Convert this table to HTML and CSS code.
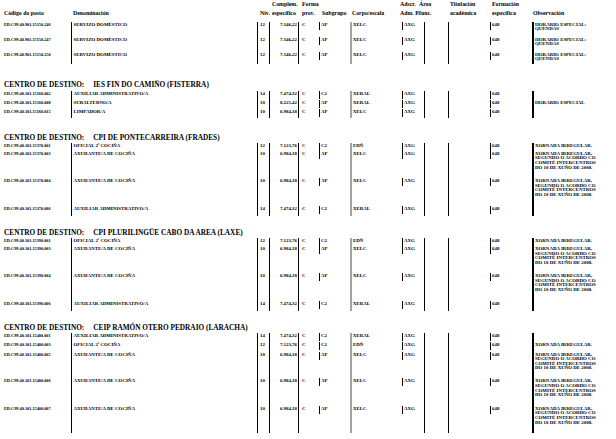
FILE: index.html
```html
<!DOCTYPE html>
<html lang="gl">
<head>
<meta charset="utf-8">
<title>Relación de postos</title>
<link rel="stylesheet" href="styles.css">
</head>
<body>
<div class="page">
  <div class="thead">
    <div class="code">Código do posto</div>
    <div>Denominación</div>
    <div>Niv.</div>
    <div>Complem.<br>específico</div>
    <div>Forma<br>prov.</div>
    <div>Subgrupo</div>
    <div>Corpo/escala</div>
    <div>Adscr.<br>Adm. P.</div>
    <div class="area-h">Área<br>func.</div>
    <div>Titulación<br>académica</div>
    <div>Formación<br>específica</div>
    <div>Observación</div>
  </div>

  <div class="block top">
    <div class="row h-15">
      <div class="code">ED.C99.40.901.15150.246</div><div class="den">SERVIZO DOMÉSTICO</div><div class="niv">12</div><div class="comp">7.346,22</div><div class="forma">C</div><div class="seg"><span>AP</span></div><div class="corpo">XELC</div><div class="seg"><span>AXG</span></div><div class="line"></div><div class="line"></div><div class="seg"><span>648</span></div><div class="obs">HORARIO ESPECIAL:<br>QUENDAS</div>
    </div>
    <div class="row h-15">
      <div class="code">ED.C99.40.901.15150.247</div><div class="den">SERVIZO DOMÉSTICO</div><div class="niv">12</div><div class="comp">7.346,22</div><div class="forma">C</div><div class="seg"><span>AP</span></div><div class="corpo">XELC</div><div class="seg"><span>AXG</span></div><div class="line"></div><div class="line"></div><div class="seg"><span>648</span></div><div class="obs">HORARIO ESPECIAL:<br>QUENDAS</div>
    </div>
    <div class="row h-12">
      <div class="code">ED.C99.40.901.15150.250</div><div class="den">SERVIZO DOMÉSTICO</div><div class="niv">12</div><div class="comp">7.346,22</div><div class="forma">C</div><div class="seg"><span>AP</span></div><div class="corpo">XELC</div><div class="seg"><span>AXG</span></div><div class="line"></div><div class="line"></div><div class="seg"><span>648</span></div><div class="obs">HORARIO ESPECIAL:<br>QUENDAS</div>
    </div>
  </div>

  <h2 class="centro first"><span>CENTRO DE DESTINO:</span><span>IES FIN DO CAMIÑO (FISTERRA)</span></h2>
  <div class="block">
    <div class="row h-9">
      <div class="code">ED.C99.40.101.15160.002</div><div class="den">AUXILIAR ADMINISTRATIVO/A</div><div class="niv">14</div><div class="comp">7.474,32</div><div class="forma">C</div><div class="seg"><span>C2</span></div><div class="corpo">XERAL</div><div class="seg"><span>AXG</span></div><div class="line"></div><div class="line"></div><div class="seg"><span>648</span></div><div class="obs"></div>
    </div>
    <div class="row h-9b">
      <div class="code">ED.C99.40.101.15160.008</div><div class="den">SUBALTERNO/A</div><div class="niv">10</div><div class="comp">8.225,42</div><div class="forma">C</div><div class="seg"><span>AP</span></div><div class="corpo">XERAL</div><div class="seg"><span>AXG</span></div><div class="line"></div><div class="line"></div><div class="seg"><span>648</span></div><div class="obs">HORARIO ESPECIAL</div>
    </div>
    <div class="row h-9">
      <div class="code">ED.C99.40.101.15160.015</div><div class="den">LIMPADOR/A</div><div class="niv">10</div><div class="comp">6.984,18</div><div class="forma">C</div><div class="seg"><span>AP</span></div><div class="corpo">XELC</div><div class="seg"><span>AXG</span></div><div class="line"></div><div class="line"></div><div class="seg"><span>648</span></div><div class="obs"></div>
    </div>
  </div>

  <h2 class="centro second"><span>CENTRO DE DESTINO:</span><span>CPI DE PONTECARREIRA (FRADES)</span></h2>
  <div class="block">
    <div class="row h-7">
      <div class="code">ED.C99.40.101.15370.001</div><div class="den">OFICIAL 2ª COCIÑA</div><div class="niv">12</div><div class="comp">7.123,76</div><div class="forma">C</div><div class="seg"><span>C2</span></div><div class="corpo">EDÑ</div><div class="seg"><span>AXG</span></div><div class="line"></div><div class="line"></div><div class="seg"><span>648</span></div><div class="obs">XORNADA IRREGULAR.</div>
    </div>
    <div class="row h-27">
      <div class="code">ED.C99.40.101.15370.003</div><div class="den">AXUDANTE/A DE COCIÑA</div><div class="niv">10</div><div class="comp">6.984,18</div><div class="forma">C</div><div class="seg"><span>AP</span></div><div class="corpo">XELC</div><div class="seg"><span>AXG</span></div><div class="line"></div><div class="line"></div><div class="seg"><span>648</span></div><div class="obs">XORNADA IRREGULAR,<br>SEGUNDO O ACORDO CO<br>COMITÉ INTERCENTROS<br>DO 10 DE XUÑO DE 2008.</div>
    </div>
    <div class="row h-27">
      <div class="code">ED.C99.40.101.15370.004</div><div class="den">AXUDANTE/A DE COCIÑA</div><div class="niv">10</div><div class="comp">6.984,18</div><div class="forma">C</div><div class="seg"><span>AP</span></div><div class="corpo">XELC</div><div class="seg"><span>AXG</span></div><div class="line"></div><div class="line"></div><div class="seg"><span>648</span></div><div class="obs">XORNADA IRREGULAR,<br>SEGUNDO O ACORDO CO<br>COMITÉ INTERCENTROS<br>DO 10 DE XUÑO DE 2008.</div>
    </div>
    <div class="row h-10">
      <div class="code">ED.C99.40.101.15370.006</div><div class="den">AUXILIAR ADMINISTRATIVO/A</div><div class="niv">14</div><div class="comp">7.474,32</div><div class="forma">C</div><div class="seg"><span>C2</span></div><div class="corpo">XERAL</div><div class="seg"><span>AXG</span></div><div class="line"></div><div class="line"></div><div class="seg"><span>648</span></div><div class="obs"></div>
    </div>
  </div>

  <h2 class="centro"><span>CENTRO DE DESTINO:</span><span>CPI PLURILINGÜE CABO DA AREA (LAXE)</span></h2>
  <div class="block">
    <div class="row h-7">
      <div class="code">ED.C99.40.101.15390.001</div><div class="den">OFICIAL 2ª COCIÑA</div><div class="niv">12</div><div class="comp">7.123,76</div><div class="forma">C</div><div class="seg"><span>C2</span></div><div class="corpo">EDÑ</div><div class="seg"><span>AXG</span></div><div class="line"></div><div class="line"></div><div class="seg"><span>648</span></div><div class="obs">XORNADA IRREGULAR.</div>
    </div>
    <div class="row h-27">
      <div class="code">ED.C99.40.101.15390.003</div><div class="den">AXUDANTE/A DE COCIÑA</div><div class="niv">10</div><div class="comp">6.984,18</div><div class="forma">C</div><div class="seg"><span>AP</span></div><div class="corpo">XELC</div><div class="seg"><span>AXG</span></div><div class="line"></div><div class="line"></div><div class="seg"><span>648</span></div><div class="obs">XORNADA IRREGULAR,<br>SEGUNDO O ACORDO CO<br>COMITÉ INTERCENTROS<br>DO 10 DE XUÑO DE 2008.</div>
    </div>
    <div class="row h-27">
      <div class="code">ED.C99.40.101.15390.004</div><div class="den">AXUDANTE/A DE COCIÑA</div><div class="niv">10</div><div class="comp">6.984,18</div><div class="forma">C</div><div class="seg"><span>AP</span></div><div class="corpo">XELC</div><div class="seg"><span>AXG</span></div><div class="line"></div><div class="line"></div><div class="seg"><span>648</span></div><div class="obs">XORNADA IRREGULAR,<br>SEGUNDO O ACORDO CO<br>COMITÉ INTERCENTROS<br>DO 10 DE XUÑO DE 2008.</div>
    </div>
    <div class="row h-10">
      <div class="code">ED.C99.40.101.15390.006</div><div class="den">AUXILIAR ADMINISTRATIVO/A</div><div class="niv">14</div><div class="comp">7.474,32</div><div class="forma">C</div><div class="seg"><span>C2</span></div><div class="corpo">XERAL</div><div class="seg"><span>AXG</span></div><div class="line"></div><div class="line"></div><div class="seg"><span>648</span></div><div class="obs"></div>
    </div>
  </div>

  <h2 class="centro"><span>CENTRO DE DESTINO:</span><span>CEIP RAMÓN OTERO PEDRAIO (LARACHA)</span></h2>
  <div class="block">
    <div class="row h-9">
      <div class="code">ED.C99.40.101.15400.001</div><div class="den">AUXILIAR ADMINISTRATIVO/A</div><div class="niv">14</div><div class="comp">7.474,32</div><div class="forma">C</div><div class="seg"><span>C2</span></div><div class="corpo">XERAL</div><div class="seg"><span>AXG</span></div><div class="line"></div><div class="line"></div><div class="seg"><span>648</span></div><div class="obs"></div>
    </div>
    <div class="row h-9b">
      <div class="code">ED.C99.40.101.15400.003</div><div class="den">OFICIAL 2ª COCIÑA</div><div class="niv">12</div><div class="comp">7.123,76</div><div class="forma">C</div><div class="seg"><span>C2</span></div><div class="corpo">EDÑ</div><div class="seg"><span>AXG</span></div><div class="line"></div><div class="line"></div><div class="seg"><span>648</span></div><div class="obs">XORNADA IRREGULAR.</div>
    </div>
    <div class="row h-26">
      <div class="code">ED.C99.40.101.15400.005</div><div class="den">AXUDANTE/A DE COCIÑA</div><div class="niv">10</div><div class="comp">6.984,18</div><div class="forma">C</div><div class="seg"><span>AP</span></div><div class="corpo">XELC</div><div class="seg"><span>AXG</span></div><div class="line"></div><div class="line"></div><div class="seg"><span>648</span></div><div class="obs">XORNADA IRREGULAR,<br>SEGUNDO O ACORDO CO<br>COMITÉ INTERCENTROS<br>DO 10 DE XUÑO DE 2008.</div>
    </div>
    <div class="row h-27">
      <div class="code">ED.C99.40.101.15400.006</div><div class="den">AXUDANTE/A DE COCIÑA</div><div class="niv">10</div><div class="comp">6.984,18</div><div class="forma">C</div><div class="seg"><span>AP</span></div><div class="corpo">XELC</div><div class="seg"><span>AXG</span></div><div class="line"></div><div class="line"></div><div class="seg"><span>648</span></div><div class="obs">XORNADA IRREGULAR,<br>SEGUNDO O ACORDO CO<br>COMITÉ INTERCENTROS<br>DO 10 DE XUÑO DE 2008.</div>
    </div>
    <div class="row h-28">
      <div class="code">ED.C99.40.101.15400.007</div><div class="den">AXUDANTE/A DE COCIÑA</div><div class="niv">10</div><div class="comp">6.984,18</div><div class="forma">C</div><div class="seg"><span>AP</span></div><div class="corpo">XELC</div><div class="seg"><span>AXG</span></div><div class="line"></div><div class="line"></div><div class="seg"><span>648</span></div><div class="obs">XORNADA IRREGULAR,<br>SEGUNDO O ACORDO CO<br>COMITÉ INTERCENTROS<br>DO 10 DE XUÑO DE 2008.</div>
    </div>
  </div>
</div>
</body>
</html>
```

FILE: styles.css
```css
html, body {
  margin: 0;
  padding: 0;
  background: #ffffff;
}

body {
  font-family: "Liberation Serif", "Times New Roman", serif;
  font-weight: bold;
  color: #000000;
}

.page {
  width: 616px;
  overflow: hidden;
}

/* Header */
.thead {
  display: grid;
  grid-template-columns: 73px 187px 12px 30px 20px 30px 48px 18px 32px 42px 41px 83px;
  align-items: end;
  height: 17px;
  font-size: 5.8px;
  line-height: 8.4px;
  white-space: nowrap;
}

.thead .code {
  padding-left: 4px;
}

.thead .area-h {
  padding-left: 1px;
}

/* Blocks of rows */
.block.top {
  margin-top: 4.7px;
}

.row {
  display: grid;
  grid-template-columns: 71px 186px 12px 29px 21px 31px 52px 22px 24px 42px 42px 84px;
  font-size: 4.9px;
  line-height: 4.6px;
  white-space: nowrap;
}

.row > div {
  box-sizing: border-box;
  padding-top: 1px;
  min-width: 0;
}

.row .code {
  padding-left: 4px;
  font-size: 4.3px;
}

.row .den {
  border-left: 1px solid #000;
  padding-left: 1.5px;
}

.row .niv {
  border-left: 1px solid #000;
  padding-left: 2px;
}

.row .comp {
  border-left: 1px solid #000;
  text-align: right;
  padding-right: 1px;
}

.row .forma {
  border-left: 1px solid #000;
  padding-left: 3px;
}

.row .corpo {
  border-left: 2px solid #a4a4a4;
  padding-left: 1px;
}

.row .line {
  border-left: 1px solid #000;
}

.row .obs {
  border-left: 2px solid #000;
  padding-left: 1px;
}

.row .seg {
  padding-top: 0;
}

.row .seg span {
  display: block;
  height: 8px;
  box-sizing: border-box;
  padding-top: 1px;
  padding-left: 1px;
  border-left: 1px solid #000;
}

/* Row heights taken from the report layout */
.h-15 { height: 15px; }
.h-12 { height: 12.3px; }
.h-9 { height: 9px; }
.h-9b { height: 9.3px; }
.h-7 { height: 7.6px; }
.h-10 { height: 10.1px; }
.h-26 { height: 26.7px; }
.h-27 { height: 27.4px; }
.h-28 { height: 27.7px; }

/* Centre headings */
.centro {
  display: flex;
  gap: 9px;
  margin: 13px 0 1.6px;
  padding-left: 4px;
  font-size: 7.3px;
  line-height: 8px;
  font-weight: bold;
  white-space: nowrap;
}

.centro.first {
  margin-top: 17.3px;
  margin-bottom: 1.4px;
}

.centro.second {
  margin-top: 15.7px;
}
```
